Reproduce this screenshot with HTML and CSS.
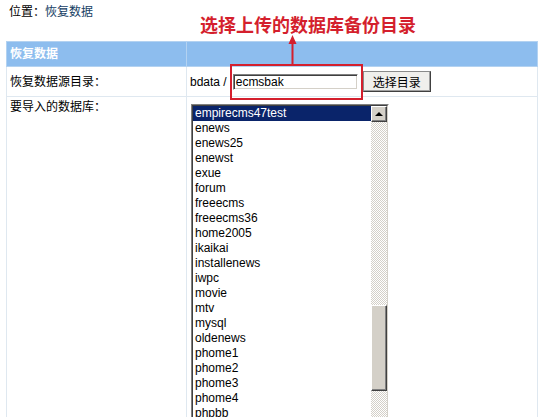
FILE: index.html
```html
<!DOCTYPE html>
<html lang="zh-CN">
<head>
    <meta charset="UTF-8">
    <title>恢复数据</title>
    <link rel="stylesheet" href="styles.css">
</head>
<body>
    <div class="page">
        <div class="nav">位置：<a href="#">恢复数据</a></div>

        <table class="form">
            <tr class="head">
                <td>恢复数据</td>
                <td></td>
            </tr>
            <tr class="line">
                <td>恢复数据源目录：</td>
                <td>
                    <div class="path">
                        <span>bdata /</span>
                        <span class="field">ecmsbak</span>
                        <span class="btn">选择目录</span>
                    </div>
                </td>
            </tr>
            <tr class="tall">
                <td>要导入的数据库：</td>
                <td>
                    <div class="listbox">
                        <div class="inner">
                            <ul class="items">
                                <li class="selected">empirecms47test</li>
                                <li>enews</li>
                                <li>enews25</li>
                                <li>enewst</li>
                                <li>exue</li>
                                <li>forum</li>
                                <li>freeecms</li>
                                <li>freeecms36</li>
                                <li>home2005</li>
                                <li>ikaikai</li>
                                <li>installenews</li>
                                <li>iwpc</li>
                                <li>movie</li>
                                <li>mtv</li>
                                <li>mysql</li>
                                <li>oldenews</li>
                                <li>phome1</li>
                                <li>phome2</li>
                                <li>phome3</li>
                                <li>phome4</li>
                                <li>phpbb</li>
                            </ul>
                            <div class="scroll">
                                <div class="up"><span class="tri"></span></div>
                                <div class="gap"></div>
                                <div class="thumb"></div>
                            </div>
                        </div>
                    </div>
                </td>
            </tr>
        </table>

        <!-- 标注 -->
        <div class="note">选择上传的数据库备份目录</div>
        <svg class="arrow" width="9" height="30" viewBox="0 0 9 30">
            <polygon points="4.5,0 8.5,9 0.5,9" fill="#d41f2d"/>
            <rect x="3.5" y="8" width="2" height="22" fill="#d41f2d"/>
        </svg>
        <div class="mark"></div>
    </div>
</body>
</html>
```

FILE: styles.css
```css
body {
    margin: 0;
    font-family: "Liberation Sans", "Noto Sans CJK SC", sans-serif;
    font-size: 12px;
    color: #000;
    background: #fff;
    overflow: hidden;
}

.page {
    position: relative;
    height: 417px;
    padding: 0 6px;
}

.nav {
    height: 41px;
    box-sizing: border-box;
    padding: 4px 0 0 3px;
    line-height: 16px;
}

.nav a {
    color: #163e64;
    text-decoration: none;
}

.form {
    width: 532px;
    border-collapse: collapse;
    border: 1px solid #a4c9ea;
}

.form td {
    border: 1px solid #dfe8f0;
    padding: 0 3px;
    line-height: 16px;
}

.form td:first-child {
    width: 173px;
}

.head td {
    height: 24px;
    background: #8dbdee;
    border-color: #b3d2f1;
    color: #fff;
    font-weight: bold;
}

.line td {
    height: 29px;
}

.tall td {
    vertical-align: top;
    padding-top: 2px;
    height: 330px;
}

.path {
    display: flex;
    align-items: center;
}

.field {
    margin-left: 6px;
    width: 121px;
    height: 14px;
    line-height: 14px;
    padding-left: 2px;
    background: #fff;
    border: 1px solid #808080;
    border-right-color: #fff;
    border-bottom-color: #fff;
    box-shadow: inset 1px 1px 0 #404040, inset -1px -1px 0 #d4d0c8;
}

.btn {
    margin-left: 5px;
    width: 66px;
    height: 19px;
    line-height: 19px;
    text-align: center;
    background: #f0efec;
    border: 1px solid #8a8a8a;
    border-right-color: #404040;
    border-bottom-color: #404040;
    box-shadow: inset -1px -1px 0 #a0a0a0;
    font-family: "Noto Sans CJK SC", sans-serif;
}

/* 列表框 */
.listbox {
    margin: 5px 0 0 1px;
    width: 196px;
    border: 1px solid #808080;
    border-right-color: #fff;
    border-bottom: none;
}

.inner {
    display: flex;
    border: 1px solid #404040;
    border-right-color: #d4d0c8;
    border-bottom: none;
    height: 330px;
    background: #fff;
}

.items {
    list-style: none;
    margin: 0;
    padding: 0;
    flex: 1;
}

.items li {
    height: 15px;
    line-height: 15px;
    padding-left: 2px;
}

.items li.selected {
    background: #0a246a;
    color: #fff;
}

.scroll {
    width: 16px;
    display: flex;
    flex-direction: column;
    background-color: #fff;
    background-image: conic-gradient(#d4d0c8 25%, #fff 0 50%, #d4d0c8 0 75%, #fff 0);
    background-size: 2px 2px;
}

.up,
.thumb {
    box-sizing: border-box;
    background: #d4d0c8;
    border: 1px solid #fff;
    border-right-color: #404040;
    border-bottom-color: #404040;
    box-shadow: inset -1px -1px 0 #808080;
}

.up {
    height: 16px;
    display: flex;
    justify-content: center;
    align-items: center;
}

.tri {
    width: 0;
    height: 0;
    border-left: 4px solid transparent;
    border-right: 4px solid transparent;
    border-bottom: 4px solid #000;
    margin-bottom: 1px;
}

.gap {
    height: 183px;
}

.thumb {
    height: 86px;
}

/* 红色标注 */
.note {
    position: absolute;
    left: 200px;
    top: 14px;
    font-family: "Noto Sans CJK SC", sans-serif;
    font-size: 18px;
    line-height: 20px;
    font-weight: bold;
    color: #d41f2d;
}

.arrow {
    position: absolute;
    left: 288px;
    top: 35px;
}

.mark {
    position: absolute;
    left: 230px;
    top: 64px;
    width: 133px;
    height: 36px;
    box-sizing: border-box;
    border: 2px solid #d41f2d;
}
```
